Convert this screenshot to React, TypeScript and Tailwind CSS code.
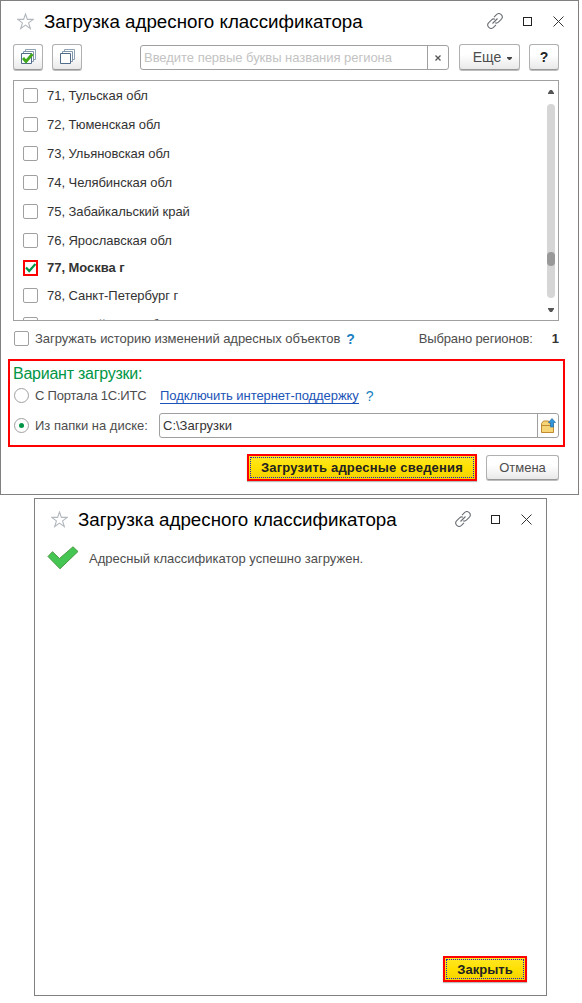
import type { ReactNode } from "react";

const regions = [
  "71, Тульская обл",
  "72, Тюменская обл",
  "73, Ульяновская обл",
  "74, Челябинская обл",
  "75, Забайкальский край",
  "76, Ярославская обл",
  "77, Москва г",
  "78, Санкт-Петербург г",
  "79, Еврейская Аобл",
];

const button =
  "flex shrink-0 items-center justify-center rounded-[3px] border border-[#b0b0b0] border-b-[#989898] bg-linear-to-b from-white from-40% to-[#e9e9e9] shadow-[0_1px_0_#bdbdbd]";

function Star() {
  return (
    <svg className="-mt-px h-[17px] w-[17px] shrink-0" viewBox="0 0 17 17" fill="none" stroke="#b3b8be" strokeWidth="1.100">
      <path d="M8.500 1 10.400 6.400H16.200L11.600 9.900 13.300 15.500 8.500 12.100 3.700 15.500 5.400 9.900.8 6.400H6.600Z" />
    </svg>
  );
}

function WindowControls() {
  return (
    <div className="-mt-0.5 flex items-center">
      <svg className="h-4 w-4" viewBox="0 0 16 16" fill="none" stroke="#6b6f75" strokeWidth="1.1">
        <path d="M7 4.2 9.5 1.7a3.3 3.3 0 0 1 4.7 4.7L11.4 9.2a3.1 3.1 0 0 1-3.3.6M9 11.8l-2.5 2.5a3.3 3.3 0 0 1-4.7-4.7L4.6 6.8a3.1 3.1 0 0 1 3.3-.6M5.5 10.5l5-5" />
      </svg>
      <div className="ml-[20px] mt-px h-[9px] w-[9px] border border-[#222]" />
      <svg className="ml-[21px] mt-px h-[11px] w-[11px]" viewBox="0 0 11 11" stroke="#333" strokeWidth="1">
        <path d="m.5.5 10 10m0-10-10 10" />
      </svg>
    </div>
  );
}

function TitleBar() {
  return (
    <div className="flex h-[42px] shrink-0 items-center pl-4 pr-[14px]">
      <Star />
      <h1 className="ml-[10px] grow whitespace-nowrap text-[18.750px] text-black">Загрузка адресного классификатора</h1>
      <WindowControls />
    </div>
  );
}

function Sheets({ checked }: { checked?: boolean }) {
  return (
    <svg className="h-4 w-4" viewBox="0 0 16 16" fill="white" stroke="#4f6d8a" strokeWidth="1">
      <path d="M5.500.5h10v10h-10z" stroke="#8fa3b5" />
      <path d="M3.500 2.500h10v10h-10z" stroke="#7f96aa" />
      <path d="M1.500 4.500h10v10h-10z" />
      {checked && <path d="m3 9 3 3.500L12.500 5" fill="none" stroke="#42a91d" strokeWidth="2.800" />}
    </svg>
  );
}

function CheckBox() {
  return <span className="h-[15px] w-[15px] shrink-0 rounded-[2px] border border-[#a0a0a0] bg-white" />;
}

function PrimaryButton({ children, className }: { children: ReactNode; className: string }) {
  return (
    <button className={`${className} border-2 border-[#f00] bg-linear-to-b from-[#ffe720] via-[#ffe000] to-[#f3d200] p-px shadow-[0_1px_1px_#bbb]`}>
      <span className="flex h-full items-center justify-center whitespace-nowrap border border-dotted border-[#2020c0] pt-px text-[13px] font-bold text-[#222]">
        {children}
      </span>
    </button>
  );
}

export default function App() {
  return (
    <div className="h-[1003px] w-[582px] bg-white font-['Liberation_Sans',sans-serif] text-[13px] leading-4 text-[#4d4d4d]">
      <section className="flex h-[495px] w-[579px] flex-col border border-[#808080]">
        <TitleBar />
        <div className="mt-px flex h-[27px] shrink-0 items-stretch pl-3">
          <button className={`${button} h-[26px] w-[30px]`}><Sheets checked /></button>
          <button className={`${button} ml-[9px] h-[26px] w-[30px]`}><Sheets /></button>
          <div className="ml-[58px] mt-px flex h-[25px] w-[309px] rounded-[3px] border border-[#a0a0a0]">
            <span className="grow whitespace-nowrap pl-[3px] pt-1 tracking-[-0.03px] text-[#c3c3c3]">Введите первые буквы названия региона</span>
            <span className="flex w-[21px] items-center justify-center border-l border-[#a0a0a0]">
              <svg className="h-[6px] w-[6px]" viewBox="0 0 6 6" stroke="#555" strokeWidth="1.300"><path d="m.5.5 5 5m0-5-5 5" /></svg>
            </span>
          </div>
          <button className={`${button} ml-[10px] h-[26px] w-[61px] pl-[6px]`}>
            <span className="text-[14px]">Еще</span>
            <svg className="ml-[6px] mt-0.5 h-[3px] w-[5px]" viewBox="0 0 5 3" fill="#444"><path d="M0 0h5v1L3 3H2L0 1z" /></svg>
          </button>
          <button className={`${button} ml-[9px] h-[26px] w-[30px] text-[14px] font-bold text-[#222]`}>?</button>
        </div>

        <div className="ml-3 mt-[9px] flex h-[241px] w-[546px] shrink-0 overflow-hidden border border-[#a0a0a0]">
          <ul className="grow tracking-[-0.04px] text-[#333]">
            {regions.map((name) =>
              name.startsWith("77") ? (
                <li key={name} className="flex h-[26px] items-center pl-[9px] font-bold">
                  <span className="flex h-4 w-[15px] items-center justify-center border-2 border-[#f00]">
                    <svg className="h-[10px] w-[11px] shrink-0" viewBox="0 0 11 10" fill="none" stroke="#009646" strokeWidth="2.200"><path d="m1 4.500 3.200 3.500L10.500 1" /></svg>
                  </span>
                  <span className="ml-[9px]">{name}</span>
                </li>
              ) : (
                <li key={name} className="flex h-[29px] items-center pl-[9px]">
                  <CheckBox />
                  <span className="ml-[9px] pt-px">{name}</span>
                </li>
              ),
            )}
          </ul>
          <div className="flex w-[14px] flex-col items-center pb-2 pt-[9px]">
            <svg className="h-1 w-1.5" viewBox="0 0 6 4" fill="#555"><path d="M0 4h6V3L4 0H2L0 3z" /></svg>
            <div className="mb-[10px] mt-[10px] w-2 grow rounded-full bg-[#d6d6d6] pt-[148px]">
              <div className="h-[14px] rounded-full bg-[#999]" />
            </div>
            <svg className="h-1 w-1.5" viewBox="0 0 6 4" fill="#555"><path d="M0 0h6v1L4 4H2L0 1z" /></svg>
          </div>
        </div>

        <div className="ml-[13px] mt-2 flex h-[19px] w-[545px] shrink-0 items-center">
          <CheckBox />
          <span className="ml-1.5 whitespace-nowrap tracking-[-0.04px]">Загружать историю изменений адресных объектов</span>
          <span className="ml-[6px] text-[14px] font-bold text-[#1a7fc1]">?</span>
          <span className="ml-auto whitespace-nowrap pt-px tracking-[-0.15px]">Выбрано регионов:</span>
          <span className="ml-[19px] pt-px font-bold text-[#333]">1</span>
        </div>

        <div className="ml-[7px] mt-[11px] flex h-[88px] w-[557px] shrink-0 flex-col border-2 border-[#f00] pl-[3px]">
          <h2 className="mt-[3px] h-5 text-[16px] leading-5 tracking-[-0.25px] text-[#009646]">Вариант загрузки:</h2>
          <div className="flex h-[23px] items-center">
            <span className="ml-px h-[15px] w-[15px] rounded-full border border-[#a0a0a0]" />
            <span className="ml-1.5 w-[125px] whitespace-nowrap tracking-[-0.22px]">С Портала 1С:ИТС</span>
            <a className="whitespace-nowrap border-b border-[#1b54b8] pt-px leading-[14px] tracking-[-0.07px] text-[#1b54b8]">Подключить интернет-поддержку</a>
            <span className="ml-[7px] text-[14px] text-[#1a7fc1]">?</span>
          </div>
          <div className="mt-[6px] flex h-[25px] items-center">
            <span className="ml-px flex h-[15px] w-[15px] items-center justify-center rounded-full border border-[#a0a0a0]">
              <span className="h-[5px] w-[5px] rounded-full bg-[#009646]" />
            </span>
            <span className="ml-1.5 w-[124px] whitespace-nowrap">Из папки на диске:</span>
            <div className="flex h-[25px] w-[400px] rounded-[3px] border border-[#a0a0a0]">
              <span className="grow pl-[3px] pt-1 text-[#333]">C:\Загрузки</span>
              <span className="flex w-[21px] items-center justify-center border-l border-[#a0a0a0]">
                <svg className="h-4 w-4" viewBox="0 0 16 16">
                  <path d="M1.500 14.500v-9l2-2.500h5l1 2.500h4v9z" fill="#f6d579" stroke="#c08b30" />
                  <path d="M1.500 7.500h12" stroke="#c08b30" />
                  <path d="m12 .5 3.500 4h-2v4.500h-3V4.500h-2z" fill="#3195dc" stroke="#226ea6" strokeWidth=".7" />
                </svg>
              </span>
            </div>
          </div>
        </div>

        <div className="ml-[246px] mt-[7px] flex shrink-0 items-start">
          <PrimaryButton className="h-[27px] w-[230px] tracking-[0.2px]">Загрузить адресные сведения</PrimaryButton>
          <button className={`${button} ml-[9px] mt-px h-[25px] w-[73px]`}>Отмена</button>
        </div>
      </section>

      <section className="ml-[34px] mt-[3px] flex h-[498px] w-[513px] flex-col border border-[#808080]">
        <TitleBar />
        <div className="ml-3 mt-[3px] flex h-7 items-center">
          <svg className="h-6 w-8" viewBox="0 0 32 24">
            <path d="m1 10.500 4.500-4.800 7 6.800L26 .8l5 4.700L13 22.800z" fill="#45c653" stroke="#4a9b43" strokeLinejoin="round" />
          </svg>
          <span className="ml-[10px] whitespace-nowrap pt-0.5">Адресный классификатор успешно загружен.</span>
        </div>
        <div className="mb-[13px] mr-[19px] mt-auto flex justify-end">
          <PrimaryButton className="h-[26px] w-[84px]">Закрыть</PrimaryButton>
        </div>
      </section>
    </div>
  );
}
